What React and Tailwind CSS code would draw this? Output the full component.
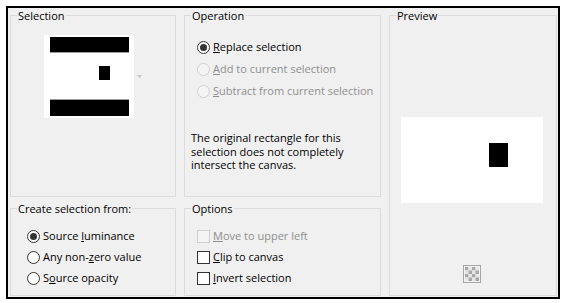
import React from 'react';

function Group({ title, className = '', children }) {
  return (
    <div className={`relative border border-[#dcdcdc] ${className}`}>
      <span className="absolute -top-[7px] left-[6px] bg-[#f0f0f0] px-[1px] leading-[14px] text-black">
        {title}
      </span>
      {children}
    </div>
  );
}

function Radio({ checked, disabled, children }) {
  return (
    <div className="flex h-[22px] items-center gap-[3px]">
      <span
        className={`flex h-[13px] w-[13px] items-center justify-center rounded-full border ${
          disabled ? 'border-[#cfcfcf] bg-[#f4f4f4]' : 'border-[#333] bg-white'
        }`}
      >
        {checked && <span className="h-[7px] w-[7px] rounded-full bg-[#333]" />}
      </span>
      <span className={disabled ? 'text-[#8f8f8f]' : 'text-black'}>{children}</span>
    </div>
  );
}

function Check({ disabled, children }) {
  return (
    <div className="flex h-[21px] items-center gap-[3px]">
      <span
        className={`h-[13px] w-[13px] border ${
          disabled ? 'border-[#cfcfcf] bg-[#f4f4f4]' : 'border-[#333] bg-white'
        }`}
      />
      <span className={disabled ? 'text-[#8f8f8f]' : 'text-black'}>{children}</span>
    </div>
  );
}

function Thumb() {
  return (
    <svg width="90" height="83" viewBox="0 0 90 83">
      <rect width="90" height="83" fill="#fff" />
      <rect x="6" y="2" width="79" height="15" fill="#000" />
      <rect x="6" y="17" width="79" height="1" fill="#9a9a9a" />
      <rect x="55" y="31" width="11" height="14" fill="#000" />
      <rect x="6" y="64" width="79" height="1" fill="#9a9a9a" />
      <rect x="6" y="65" width="79" height="16" fill="#000" />
    </svg>
  );
}

function Checker() {
  const cells = [];
  for (let r = 0; r < 4; r++) {
    for (let c = 0; c < 4; c++) {
      cells.push(
        <rect
          key={`${r}-${c}`}
          x={2 + c * 3.5}
          y={2 + r * 3.5}
          width="3.5"
          height="3.5"
          fill={(r + c) % 2 === 0 ? '#a8a8a8' : '#e6e6e6'}
        />
      );
    }
  }
  return (
    <svg width="18" height="18" viewBox="0 0 18 18">
      <rect x="0.5" y="0.5" width="17" height="17" fill="#f4f4f4" stroke="#a6a6a6" />
      {cells}
    </svg>
  );
}

export default function App() {
  return (
    <div
      className="h-[303px] w-[565px] bg-white pl-[6px] pt-[6px] text-[11px]"
      style={{ fontFamily: '"Open Sans", "Noto Sans", sans-serif' }}
    >
      <div className="h-[293px] w-[554px] border-2 border-black bg-[#f0f0f0] pl-[2px] pt-[7px]">
        <div className="grid grid-cols-[166px_197px_168px] grid-rows-[182px_88px] gap-x-[8px] gap-y-[11px]">
          <Group title="Selection">
            <div className="flex items-center gap-[3px] pl-[33px] pt-[19px]">
              <Thumb />
              <svg width="5" height="3" viewBox="0 0 5 3">
                <path d="M0 0h5L2.5 3z" fill="#c4c4c4" />
              </svg>
            </div>
          </Group>

          <Group title="Operation">
            <div className="pl-[12px] pt-[20px]">
              <Radio checked>
                <u>R</u>eplace selection
              </Radio>
              <Radio disabled>
                <u>A</u>dd to current selection
              </Radio>
              <Radio disabled>
                <u>S</u>ubtract from current selection
              </Radio>
            </div>
            <p className="mt-[29px] pl-[6px] leading-[13.5px] text-black">
              The original rectangle for this
              <br />
              selection does not completely
              <br />
              intersect the canvas.
            </p>
          </Group>

          <Group title="Preview" className="row-span-2">
            <div className="pl-[11px] pt-[101px]">
              <div className="flex h-[86px] w-[142px] bg-white pl-[88px] pt-[26px]">
                <div className="h-[24px] w-[19px] bg-black" />
              </div>
              <div className="ml-[62px] mt-[62px] flex">
                <Checker />
              </div>
            </div>
          </Group>

          <Group title="Create selection from:">
            <div className="pl-[16px] pt-[17px] [&>div]:h-[21px]">
              <Radio checked>
                Source <u>l</u>uminance
              </Radio>
              <Radio>
                Any non-<u>z</u>ero value
              </Radio>
              <Radio>
                S<u>o</u>urce opacity
              </Radio>
            </div>
          </Group>

          <Group title="Options">
            <div className="pl-[12px] pt-[17px]">
              <Check disabled>
                <u>M</u>ove to upper left
              </Check>
              <Check>
                <u>C</u>lip to canvas
              </Check>
              <Check>
                <u>I</u>nvert selection
              </Check>
            </div>
          </Group>
        </div>
      </div>
    </div>
  );
}
